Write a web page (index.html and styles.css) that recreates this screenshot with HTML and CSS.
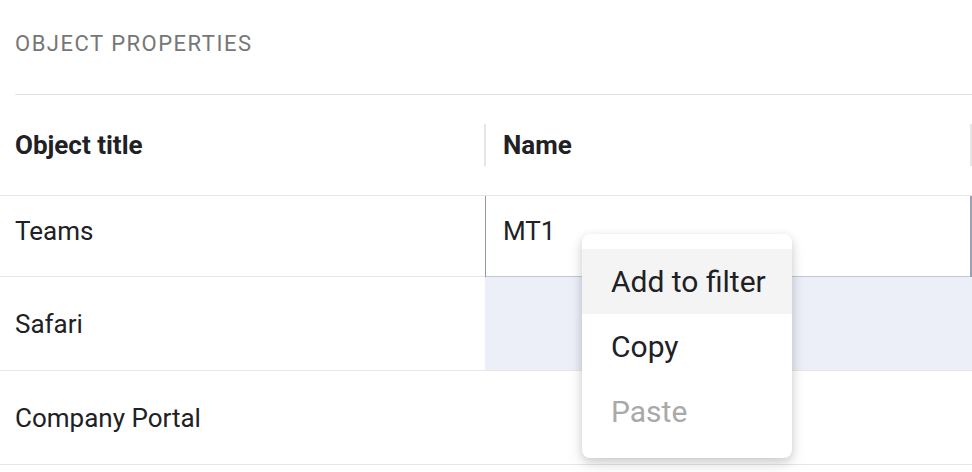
FILE: index.html
```html
<!DOCTYPE html>
<html lang="en">
<head>
<meta charset="utf-8">
<title>Object properties</title>
<link rel="stylesheet" href="styles.css">
</head>
<body>
<div class="page">
  <div class="title-wrap">
    <div class="title">OBJECT PROPERTIES</div>
  </div>
  <div class="table">
    <div class="row head">
      <div class="cell c1"><span>Object title</span></div>
      <div class="cell c2"><span class="sep"></span><span class="label">Name</span><span class="sep end"></span></div>
    </div>
    <div class="row r1">
      <div class="cell c1">Teams</div>
      <div class="cell c2 focused">MT1</div>
    </div>
    <div class="row r2">
      <div class="cell c1">Safari</div>
      <div class="cell c2 selected"></div>
    </div>
    <div class="row r3">
      <div class="cell c1">Company Portal</div>
      <div class="cell c2"></div>
    </div>
  </div>
  <div class="menu">
    <div class="item active">Add to filter</div>
    <div class="item">Copy</div>
    <div class="item disabled">Paste</div>
  </div>
</div>
</body>
</html>
```
FILE: styles.css
```css
html, body {
  margin: 0;
  padding: 0;
  background: #ffffff;
}
body {
  font-family: Roboto, "Liberation Sans", Arial, sans-serif;
  color: #202124;
  width: 972px;
  height: 472px;
  overflow: hidden;
}
.page {
  position: relative;
  width: 972px;
  height: 472px;
}
.title-wrap {
  padding-left: 15px;
}
.title {
  font-size: 22px;
  line-height: 30px;
  letter-spacing: 1.5px;
  color: #767676;
  padding-top: 29px;
  height: 35px;
  padding-bottom: 0;
  box-sizing: content-box;
  height: 30px;
  padding-bottom: 35px;
  border-bottom: 1px solid #e3e3e3;
}
.table {
  width: 972px;
}
.row {
  display: flex;
  border-bottom: 1px solid #e6e6e6;
  font-size: 26px;
}
.cell {
  display: flex;
  align-items: center;
  box-sizing: border-box;
}
.c1 {
  width: 485px;
  padding-left: 15px;
}
.c2 {
  flex: 1;
  padding-left: 18px;
}
.head {
  height: 101px;
  box-sizing: border-box;
  font-weight: 700;
}
.head .c1 {
  width: 484px;
}
.head .c2 {
  padding-left: 0;
}
.sep {
  width: 2px;
  height: 42px;
  background: #e6e6e6;
}
.label {
  margin-left: 17px;
  flex: 1;
}
.sep.end {
  width: 2px;
  margin-right: 0;
}
.r1 {
  height: 81px;
  box-sizing: border-box;
}
.r1 .cell {
  align-items: flex-start;
  padding-top: 19px;
  line-height: 32px;
}
.r2, .r3 {
  height: 94px;
  box-sizing: border-box;
}
.focused {
  box-shadow: inset 1px 0 #8e98ad, inset -2px 0 #98a1b5, inset 0 -1px #c3c8d8;
  margin-bottom: -1px;
  height: 81px;
}
.selected {
  background: #eceef8;
}
.menu {
  position: absolute;
  left: 582px;
  top: 234px;
  width: 210px;
  padding: 15px 0 14px;
  background: #ffffff;
  border-radius: 8px;
  box-shadow: 0 3px 10px rgba(0, 0, 0, 0.16), 0 8px 18px rgba(0, 0, 0, 0.08);
}
.item {
  height: 65px;
  display: flex;
  align-items: center;
  padding-left: 29px;
  font-size: 30px;
  color: #202124;
}
.item.active {
  background: #f4f4f4;
}
.item.disabled {
  color: #a9a9a9;
}
```
